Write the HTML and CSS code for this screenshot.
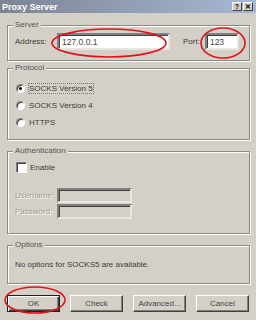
FILE: index.html
```html
<!DOCTYPE html>
<html lang="en">
<head>
    <meta charset="UTF-8">
    <title>Proxy Server</title>
    <link rel="stylesheet" href="styles.css">
</head>
<body>
    <div class="window">
        <div class="titlebar">
            <span class="title">Proxy Server</span>
            <span class="caption-btns">
                <span class="cap-btn">?</span>
                <span class="cap-btn">&#x2715;</span>
            </span>
        </div>

        <div class="content">
            <fieldset class="group server">
                <legend>Server</legend>
                <div class="row">
                    <label class="lbl">Address:</label>
                    <input type="text" class="field address" value="127.0.0.1">
                    <label class="lbl port-lbl">Port:</label>
                    <input type="text" class="field port" value="123">
                </div>
            </fieldset>

            <fieldset class="group protocol">
                <legend>Protocol</legend>
                <div class="radio-row">
                    <span class="radio checked"></span>
                    <span class="focus">SOCKS Version 5</span>
                </div>
                <div class="radio-row">
                    <span class="radio"></span>
                    <span>SOCKS Version 4</span>
                </div>
                <div class="radio-row">
                    <span class="radio"></span>
                    <span>HTTPS</span>
                </div>
            </fieldset>

            <fieldset class="group auth">
                <legend>Authentication</legend>
                <div class="check-row">
                    <span class="checkbox"></span>
                    <span>Enable</span>
                </div>
                <div class="row disabled-row">
                    <label class="lbl disabled">Username:</label>
                    <input type="text" class="field off" disabled>
                </div>
                <div class="row disabled-row">
                    <label class="lbl disabled">Password:</label>
                    <input type="text" class="field off" disabled>
                </div>
            </fieldset>

            <fieldset class="group options">
                <legend>Options</legend>
                <p class="note">No options for SOCKS5 are available.</p>
            </fieldset>

            <div class="buttons">
                <button class="btn default">OK</button>
                <button class="btn">Check</button>
                <button class="btn">Advanced...</button>
                <button class="btn">Cancel</button>
            </div>
        </div>

        <!-- red marks drawn over the screenshot -->
        <svg class="marks" width="256" height="320" viewBox="0 0 256 320">
            <ellipse cx="109" cy="43" rx="57" ry="14" />
            <ellipse cx="223" cy="43" rx="22" ry="15" />
            <ellipse cx="35" cy="300" rx="30" ry="13" />
        </svg>
    </div>
</body>
</html>
```

FILE: styles.css
```css
body {
    margin: 0;
    padding: 0;
    background-color: #d4d0c8;
    font-family: 'Liberation Sans', Arial, sans-serif;
    font-size: 8px;
    color: #3c3c3c;
}

.window {
    position: relative;
    width: 256px;
    height: 320px;
    overflow: hidden;
    background-color: #d4d0c8;
}

.titlebar {
    height: 13px;
    display: flex;
    align-items: center;
    justify-content: space-between;
    padding: 0 3px 0 2px;
    background: linear-gradient(to right, #7c8494, #a6b8d4);
}

.title {
    color: #fff;
    font-weight: bold;
    font-size: 9px;
}

.caption-btns {
    display: flex;
    gap: 1px;
}

.cap-btn {
    width: 10px;
    height: 9px;
    box-sizing: border-box;
    background-color: #d4d0c8;
    border: 1px solid;
    border-color: #fff #404040 #404040 #fff;
    font-size: 7px;
    font-weight: bold;
    line-height: 7px;
    text-align: center;
    color: #000;
}

.content {
    padding: 0 6px 0 7px;
}

.group {
    box-sizing: border-box;
    margin: 0;
    padding: 0 7px;
    border: 1px solid #8c8a84;
    box-shadow: 1px 1px 0 #fff, inset 1px 1px 0 #fff;
}

.group legend {
    padding: 0 2px;
    margin-left: -2px;
    line-height: 10px;
    background-color: #d4d0c8;
    color: #555;
}

.server {
    margin-top: 7px;
    height: 41px;
}

.protocol {
    margin-top: 2px;
    height: 77px;
}

.auth {
    margin-top: 6px;
    height: 88px;
}

.options {
    margin-top: 6px;
    height: 44px;
}

.row {
    display: flex;
    align-items: center;
}

.server .row {
    margin-top: 3px;
}

.lbl {
    width: 42px;
}

.port-lbl {
    width: auto;
    margin: 0 5px 0 13px;
}

.field {
    box-sizing: border-box;
    height: 17px;
    margin: 0;
    padding: 0 3px;
    font-family: inherit;
    font-size: 8.5px;
    color: #444;
    background-color: #fff;
    border: 2px solid;
    border-color: #808080 #e8e6e0 #e8e6e0 #808080;
    box-shadow: inset 1px 1px 0 #404040;
    outline: none;
}

.address {
    width: 113px;
}

.port {
    width: 34px;
}

.field.off {
    width: 75px;
    height: 15px;
    background-color: #d4d0c8;
}

.disabled {
    color: #a09c94;
    text-shadow: 1px 1px 0 #fff;
}

.radio-row {
    display: flex;
    align-items: center;
    gap: 4px;
    height: 17px;
    padding-left: 1px;
}

.radio-row:first-of-type {
    margin-top: 7px;
}

.radio {
    box-sizing: border-box;
    width: 9px;
    height: 9px;
    border-radius: 50%;
    background-color: #fff;
    border: 1px solid;
    border-color: #808080 #fff #fff #808080;
    box-shadow: inset 1px 1px 0 #404040;
    display: flex;
    align-items: center;
    justify-content: center;
}

.radio.checked::after {
    content: "";
    width: 3px;
    height: 3px;
    border-radius: 50%;
    background-color: #000;
}

.focus {
    outline: 1px dotted #777;
    outline-offset: 0;
}

.check-row {
    display: flex;
    align-items: center;
    gap: 3px;
    margin-top: 6px;
    padding-left: 1px;
}

.checkbox {
    box-sizing: border-box;
    width: 11px;
    height: 11px;
    background-color: #fff;
    border: 1px solid;
    border-color: #808080 #fff #fff #808080;
    box-shadow: inset 1px 1px 0 #404040;
}

.disabled-row {
    margin-top: 15px;
}

.disabled-row + .disabled-row {
    margin-top: 1px;
}

.note {
    margin: 10px 0 0;
}

.buttons {
    display: flex;
    justify-content: space-between;
    margin-top: 11px;
    padding-right: 1px;
}

.btn {
    box-sizing: border-box;
    width: 53px;
    height: 17px;
    padding: 0;
    font-family: inherit;
    font-size: 8px;
    color: #444;
    background-color: #d4d0c8;
    border: 1px solid;
    border-color: #fff #404040 #404040 #fff;
    box-shadow: inset -1px -1px 0 #808080;
}

.btn.default {
    border: 1px solid #202020;
    box-shadow: inset 1px 1px 0 #fff, inset -1px -1px 0 #404040, inset -2px -2px 0 #808080;
}

.marks {
    position: absolute;
    left: 0;
    top: 0;
    pointer-events: none;
}

.marks ellipse {
    fill: none;
    stroke: #e2121a;
    stroke-width: 1.6;
}
```
